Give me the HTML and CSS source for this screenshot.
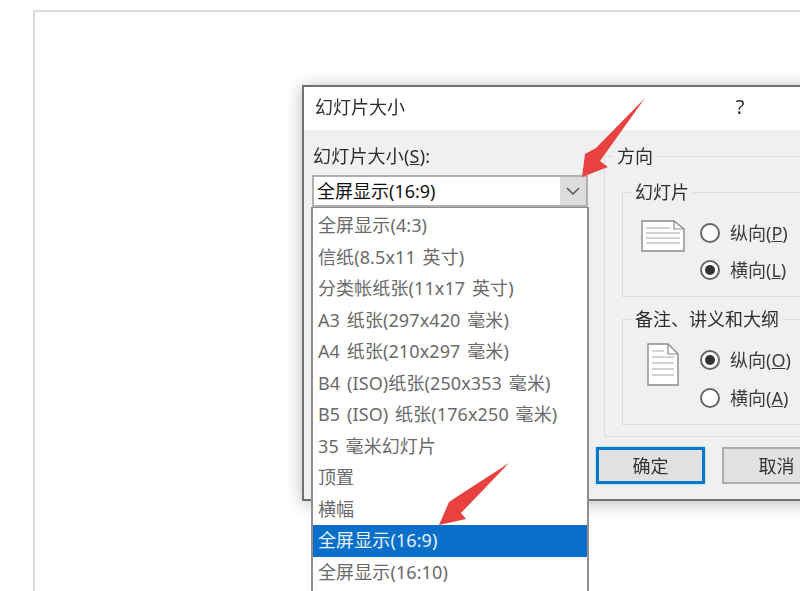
FILE: index.html
```html
<!DOCTYPE html>
<html lang="zh-CN">
<head>
<meta charset="utf-8">
<title>幻灯片大小</title>
<link rel="stylesheet" href="styles.css">
</head>
<body>
<div class="slide"></div>
<section class="dialog">
  <header class="titlebar">
    <h1 class="title">幻灯片大小</h1>
    <span class="help">?</span>
  </header>
  <div class="content">
    <div class="size-col">
      <label class="field-label">幻灯片大小(<u>S</u>):</label>
      <div class="combo">
        <span class="combo-value">全屏显示(16:9)</span>
        <span class="combo-btn">
          <svg width="14" height="8" viewBox="0 0 14 8"><path d="M1 1l6 6 6-6" fill="none" stroke="#555" stroke-width="1.5"/></svg>
        </span>
        <ul class="menu">
          <li>全屏显示(4:3)</li>
          <li>信纸(8.5x11 英寸)</li>
          <li>分类帐纸张(11x17 英寸)</li>
          <li>A3 纸张(297x420 毫米)</li>
          <li>A4 纸张(210x297 毫米)</li>
          <li>B4 (ISO)纸张(250x353 毫米)</li>
          <li>B5 (ISO) 纸张(176x250 毫米)</li>
          <li>35 毫米幻灯片</li>
          <li>顶置</li>
          <li>横幅</li>
          <li class="selected">全屏显示(16:9)</li>
          <li>全屏显示(16:10)</li>
        </ul>
      </div>
    </div>
    <fieldset class="group outer">
      <legend>方向</legend>
      <fieldset class="group inner first">
        <legend>幻灯片</legend>
        <div class="orient">
          <div class="doc-cell">
            <svg class="doc-land" width="44" height="32" viewBox="0 0 44 32"><path d="M1 1H33L43 9V31H1Z" fill="#fff" stroke="#8a8a8a" stroke-width="1.4"/><path d="M33 1V9H43" fill="none" stroke="#8a8a8a" stroke-width="1.2"/><path d="M5 8H29M5 13H39M5 18H39M5 23H39" stroke="#a8a8a8" stroke-width="1.2"/></svg>
          </div>
          <div class="radios">
            <div class="radio-row"><span class="radio"></span><span>纵向(<u>P</u>)</span></div>
            <div class="radio-row"><span class="radio on"></span><span>横向(<u>L</u>)</span></div>
          </div>
        </div>
      </fieldset>
      <fieldset class="group inner second">
        <legend>备注、讲义和大纲</legend>
        <div class="orient">
          <div class="doc-cell">
            <svg class="doc-port" width="32" height="43" viewBox="0 0 32 43"><path d="M1 1H21L31 11V42H1Z" fill="#fff" stroke="#8a8a8a" stroke-width="1.4"/><path d="M21 1V11H31" fill="none" stroke="#8a8a8a" stroke-width="1.2"/><path d="M5 8H17M5 14H27M5 20H27M5 26H27M5 32H27" stroke="#a8a8a8" stroke-width="1.2"/></svg>
          </div>
          <div class="radios tall">
            <div class="radio-row"><span class="radio on"></span><span>纵向(<u>O</u>)</span></div>
            <div class="radio-row"><span class="radio"></span><span>横向(<u>A</u>)</span></div>
          </div>
        </div>
      </fieldset>
    </fieldset>
  </div>
  <footer class="actions">
    <button class="btn primary">确定</button>
    <button class="btn">取消</button>
  </footer>
</section>
<svg class="annotations" width="800" height="591" viewBox="0 0 800 591">
  <path d="M645 98L596 148L585 154L582 177L608 167L600 161Z" fill="#e8413f"/>
  <path d="M509 463L458 496L449 502L439 525L466 519L461 513Z" fill="#e8413f"/>
</svg>
</body>
</html>
```

FILE: styles.css
```css
* { box-sizing: border-box; }
html, body { margin: 0; height: 591px; overflow: hidden; background: #fff; }
body {
  position: relative;
  font-family: "Noto Sans", "Noto Sans CJK SC", sans-serif;
  font-size: 18px;
  line-height: 24px;
  color: #2e2e2e;
}
.slide {
  width: 900px;
  height: 700px;
  margin: 10px 0 0 33px;
  border: 2px solid #dadada;
}
.dialog {
  position: absolute;
  left: 302px;
  top: 85px;
  width: 560px;
  border: 2px solid #707070;
  background: #f0f0f0;
  box-shadow: 0 2px 16px rgba(0, 0, 0, .28);
  filter: blur(.4px);
}
.titlebar {
  display: flex;
  align-items: center;
  height: 43px;
  padding: 0 0 4px 11px;
  background: #fff;
}
.title { margin: 0; font-size: 18px; font-weight: 400; }
.help { margin-left: auto; margin-right: 115px; width: 10px; font-size: 20px; text-align: center; }
.content { display: flex; gap: 16px; padding: 14px 0 0 8px; }
.size-col { flex: 0 0 276px; }
.field-label { display: block; margin-bottom: 7px; padding-left: 1px; letter-spacing: .2px; }
.combo {
  position: relative;
  display: flex;
  height: 32px;
  background: #fff;
  border: 2px solid #b0b0b0;
}
.combo-value { flex: 1; padding: 1px 0 0 3px; line-height: 26px; color: #111; }
.combo-btn {
  display: flex;
  align-items: center;
  justify-content: center;
  width: 26px;
  background: #dcdcdc;
}
.menu {
  position: absolute;
  top: 30px;
  left: -3px;
  width: 278px;
  margin: 0;
  padding: 2px 0 20px;
  list-style: none;
  background: #fff;
  border: 1px solid #8f8f8f;
  border-left-width: 2px;
  border-right-width: 2px;
  color: #6a6a6a;
  letter-spacing: .1px;
  word-spacing: 2px;
}
.menu li { height: 31.5px; padding-left: 5px; line-height: 31.5px; white-space: nowrap; }
.menu .selected { background: #0a6fc9; color: #e6f1fa; }
.group { margin: 0; min-width: 0; border: 1px solid #dcdcdc; }
.group legend { padding: 0 4px; }
.outer { flex: 1; padding: 0 0 11px 17px; }
.outer > legend { margin-left: -9px; }
.inner { padding: 10px 0 0; margin-top: 10px; }
.outer > legend + .inner { margin-top: 12px; }
.inner > legend { margin-left: 8px; }
.first { padding-bottom: 8px; }
.second { padding-bottom: 7px; }
.orient { display: flex; }
.doc-cell { flex: 0 0 77px; padding-left: 3px; text-align: center; }
.doc-cell svg { display: block; margin-left: auto; margin-right: auto; }
.doc-land { margin-top: 6px; }
.doc-port { margin-top: 2px; }
.radio-row { display: flex; align-items: center; gap: 10px; height: 37px; color: #3c3c3c; }
.tall .radio-row { height: 38px; }
.radio {
  display: flex;
  align-items: center;
  justify-content: center;
  width: 20px;
  height: 20px;
  background: #fff;
  border: 2px solid #666;
  border-radius: 50%;
}
.radio.on::after {
  content: "";
  width: 10px;
  height: 10px;
  background: #333;
  border-radius: 50%;
}
.actions { display: flex; gap: 17px; margin-top: 10px; padding: 0 0 15px 292px; }
.btn {
  width: 109px;
  height: 37px;
  padding: 0;
  font: inherit;
  color: #333;
  background: #e1e1e1;
  border: 2px solid #adadad;
}
.btn.primary { border: 3px solid #0a78c8; box-shadow: 0 0 2px #7cc4ee; }
.annotations { position: absolute; left: 0; top: 0; pointer-events: none; filter: blur(.4px); }
```
